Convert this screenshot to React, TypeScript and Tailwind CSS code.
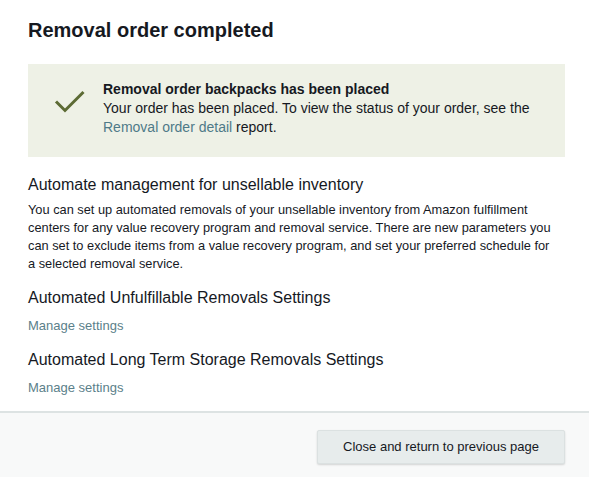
import React from 'react';

const CheckIcon: React.FC = () => (
  <svg width="32" height="26" viewBox="0 0 32 26" fill="none">
    <path d="M2 12.5 L11 21.5 L29.5 3" stroke="#5c6b34" strokeWidth="3" strokeLinecap="butt" strokeLinejoin="miter" />
  </svg>
);

export default function App() {
  return (
    <div className="w-[589px] h-[477px] bg-white flex flex-col overflow-hidden text-[#0f1111]" style={{ fontFamily: '"Liberation Sans", Arial, sans-serif' }}>
      <div className="flex-1 px-[28px]">
        {/* Title */}
        <h1 className="text-[20px] font-bold text-[#16191f] mt-[18px] leading-[24px]">Removal order completed</h1>

        {/* Success alert */}
        <div className="mt-[22px] w-[537px] h-[93px] bg-[#eef1e6] flex items-start">
          <div className="pl-[26px] pt-[25px] w-[75px] shrink-0">
            <CheckIcon />
          </div>
          <div className="pt-[16px] text-[14px] leading-[19px] text-[#16191f]">
            <p className="font-bold">Removal order backpacks has been placed</p>
            <p>Your order has been placed. To view the status of your order, see the</p>
            <p>
              <span className="text-[#4f7a88]">Removal order detail</span> report.
            </p>
          </div>
        </div>

        {/* Automate section */}
        <h2 className="mt-[18px] text-[16px] leading-[20px] text-[#16191f]">Automate management for unsellable inventory</h2>
        <p className="mt-[6px] w-[526px] text-[12.8px] leading-[18px] text-[#16191f]">
          You can set up automated removals of your unsellable inventory from Amazon fulfillment centers for any value recovery program and removal service. There are new parameters you can set to exclude items from a value recovery program, and set your preferred schedule for a selected removal service.
        </p>

        <h3 className="mt-[15px] text-[16px] leading-[20px] text-[#16191f]">Automated Unfulfillable Removals Settings</h3>
        <p className="mt-[10px] text-[13px] leading-[16px] text-[#5b7f8a]">Manage settings</p>

        <h3 className="mt-[16px] text-[16px] leading-[20px] text-[#16191f]">Automated Long Term Storage Removals Settings</h3>
        <p className="mt-[10px] text-[13px] leading-[16px] text-[#5b7f8a]">Manage settings</p>
      </div>

      {/* Footer */}
      <div className="h-[66px] shrink-0 border-t-2 border-[#dde3e3] bg-[#f8f9f9] flex justify-end items-start pr-[24px] pt-[17px]">
        <button className="w-[248px] h-[34px] bg-[#e7ecec] border border-[#dbe1e1] rounded-[2px] shadow-[0_1px_2px_rgba(0,0,0,0.15)] text-[13px] text-[#16191f]">
          Close and return to previous page
        </button>
      </div>
    </div>
  );
}
